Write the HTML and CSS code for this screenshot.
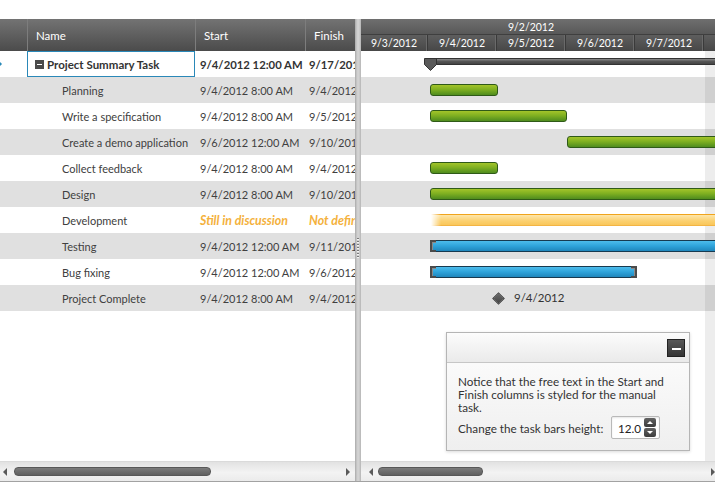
FILE: index.html
```html
<!DOCTYPE html>
<html>
<head>
<meta charset="utf-8">
<link rel="stylesheet" href="styles.css">
</head>
<body>
<div class="gantt">
  <div class="grid">
    <div class="grid-head">
      <div class="hc c0"></div>
      <div class="hc">Name</div>
      <div class="hc">Start</div>
      <div class="hc">Finish</div>
    </div>
    <div class="grid-body">
      <div class="grow summary">
        <div class="cell c0"><svg class="rowicon" width="10" height="10" viewBox="0 0 10 10"><path d="M1 5 H8 M5 2 L8 5 L5 8" fill="none" stroke="#2a8ab8" stroke-width="1.5"/></svg></div>
        <div class="cell name selected"><span class="expander"></span>Project Summary Task</div>
        <div class="cell start">9/4/2012 12:00 AM</div>
        <div class="cell finish">9/17/2012</div>
      </div>
      <div class="grow"><div class="cell c0"></div><div class="cell name child">Planning</div><div class="cell start">9/4/2012 8:00 AM</div><div class="cell finish">9/4/2012</div></div>
      <div class="grow"><div class="cell c0"></div><div class="cell name child">Write a specification</div><div class="cell start">9/4/2012 8:00 AM</div><div class="cell finish">9/5/2012</div></div>
      <div class="grow"><div class="cell c0"></div><div class="cell name child">Create a demo application</div><div class="cell start">9/6/2012 12:00 AM</div><div class="cell finish">9/10/2012</div></div>
      <div class="grow"><div class="cell c0"></div><div class="cell name child">Collect feedback</div><div class="cell start">9/4/2012 8:00 AM</div><div class="cell finish">9/4/2012</div></div>
      <div class="grow"><div class="cell c0"></div><div class="cell name child">Design</div><div class="cell start">9/4/2012 8:00 AM</div><div class="cell finish">9/10/2012</div></div>
      <div class="grow"><div class="cell c0"></div><div class="cell name child">Development</div><div class="cell start free">Still in discussion</div><div class="cell finish free">Not defined</div></div>
      <div class="grow"><div class="cell c0"></div><div class="cell name child">Testing</div><div class="cell start">9/4/2012 12:00 AM</div><div class="cell finish">9/11/2012</div></div>
      <div class="grow"><div class="cell c0"></div><div class="cell name child">Bug fixing</div><div class="cell start">9/4/2012 12:00 AM</div><div class="cell finish">9/6/2012</div></div>
      <div class="grow"><div class="cell c0"></div><div class="cell name child">Project Complete</div><div class="cell start">9/4/2012 8:00 AM</div><div class="cell finish">9/4/2012</div></div>
    </div>
    <div class="hscroll grid-scroll">
      <span class="arrow-l"></span>
      <span class="thumb grid-thumb"></span>
      <span class="arrow-r"></span>
    </div>
  </div>

  <div class="splitter"><div class="grip"></div></div>

  <div class="timeline">
    <div class="tl-head">
      <div class="week">9/2/2012</div>
      <div class="days">
        <div class="day first">9/3/2012</div>
        <div class="day">9/4/2012</div>
        <div class="day">9/5/2012</div>
        <div class="day">9/6/2012</div>
        <div class="day">9/7/2012</div>
        <div class="day"></div>
      </div>
    </div>
    <div class="tl-body">
      <div class="weekend"></div>
      <div class="trow">
        <svg class="sum-marker" width="13" height="13" viewBox="0 0 13 13"><path d="M0.5 0.5 H12.5 V6.5 L6.5 12.5 L0.5 6.5 Z" fill="#5a5a5a" stroke="#333"/></svg>
        <div class="sum-bar" style="left:75px;width:300px"></div>
      </div>
      <div class="trow"><div class="bar green" style="left:69px;width:68px"></div></div>
      <div class="trow"><div class="bar green" style="left:69px;width:137px"></div></div>
      <div class="trow"><div class="bar green" style="left:206px;width:200px"></div></div>
      <div class="trow"><div class="bar green" style="left:69px;width:68px"></div></div>
      <div class="trow"><div class="bar green" style="left:69px;width:300px"></div></div>
      <div class="trow"><div class="bar orange" style="left:70px;width:300px"></div></div>
      <div class="trow"><div class="bar blue" style="left:69px;width:300px"><span class="cap cap-l"></span></div></div>
      <div class="trow"><div class="bar blue" style="left:69px;width:207px"><span class="cap cap-l"></span><span class="cap cap-r"></span></div></div>
      <div class="trow"><div class="diamond" style="left:133px"></div><span class="ms-label">9/4/2012</span></div>

      <div class="panel">
        <div class="panel-head"><span class="min"></span></div>
        <div class="panel-body">
          <p class="note">Notice that the free text in the Start and Finish columns is styled for the manual task.</p>
          <div class="height-row">
            <span>Change the task bars height:</span>
            <div class="numeric">
              <span class="num-val">12.0</span>
              <span class="spin">
                <span class="spin-btn up"></span>
                <span class="spin-btn down"></span>
              </span>
            </div>
          </div>
        </div>
      </div>
    </div>
    <div class="hscroll tl-scroll">
      <span class="arrow-l"></span>
      <span class="thumb tl-thumb"></span>
      <span class="arrow-r"></span>
    </div>
  </div>
</div>
</body>
</html>
```

FILE: styles.css
```css
* { box-sizing: border-box; }
body {
  margin: 0;
  background: #fff;
  font-family: "Lato", "Liberation Sans", sans-serif;
  font-size: 11px;
  color: #404040;
}
.gantt {
  display: flex;
  margin-top: 19px;
  height: 463px;
  border-bottom: 1px solid #a2a2a2;
}

/* ---------- grid ---------- */
.grid {
  width: 355px;
  flex: none;
  display: flex;
  flex-direction: column;
  overflow: hidden;
}
.grid-head {
  height: 32px;
  flex: none;
  display: grid;
  grid-template-columns: 27px 168px 110px 100px;
  background: linear-gradient(#737373, #4b4b4b);
  color: #fff;
  font-size: 11.5px;
}
.hc {
  display: flex;
  align-items: center;
  padding-left: 8px;
  padding-top: 1px;
  border-left: 1px solid #7d7d7d;
  white-space: nowrap;
}
.hc.c0 { border-left: 0; }
.grid-body {
  flex: 1;
  overflow: hidden;
}
.grow {
  height: 26px;
  display: grid;
  grid-template-columns: 27px 168px 110px 100px;
  white-space: nowrap;
  background: #fff;
}
.grow:nth-child(even) { background: #e0e0e0; }
.cell {
  display: flex;
  align-items: center;
  overflow: hidden;
}
.c0 { overflow: hidden; }
.rowicon { margin-left: -7px; }
.name { padding-left: 8px; }
.name.child { padding-left: 35px; }
.start { padding-left: 5px; }
.finish { padding-left: 4px; }
.summary .cell { font-weight: bold; color: #333; font-size: 11.5px; }
.summary .start, .summary .finish { font-size: 11.3px; }
.selected { box-shadow: inset 0 0 0 1px #2a88b8; }
.expander {
  width: 9px;
  height: 9px;
  background: #4a4a4a;
  margin-right: 3px;
  display: flex;
  align-items: center;
  justify-content: center;
}
.expander::after {
  content: "";
  width: 5px;
  height: 1px;
  background: #fff;
}
.free {
  color: #f4b13c;
  font-weight: bold;
  font-style: italic;
  font-size: 12.4px;
}

/* ---------- scrollbars ---------- */
.hscroll {
  height: 20px;
  flex: none;
  display: flex;
  align-items: center;
  background: linear-gradient(#e2e2e2, #f3f3f3 55%, #ebebeb);
  border-top: 1px solid #dadada;
}
.grid-scroll { padding: 0 5px 0 3px; }
.tl-scroll { padding: 0 0 0 8px; }
.arrow-l {
  width: 0; height: 0;
  border-right: 4px solid #5a5a5a;
  border-top: 4px solid transparent;
  border-bottom: 4px solid transparent;
}
.arrow-r {
  width: 0; height: 0;
  margin-left: auto;
  border-left: 4px solid #5a5a5a;
  border-top: 4px solid transparent;
  border-bottom: 4px solid transparent;
}
.thumb {
  height: 9px;
  border-radius: 4px;
  background: linear-gradient(#7b7b7b, #606060);
  border: 1px solid #585858;
}
.grid-thumb { margin-left: 7px; width: 197px; }
.tl-thumb { margin-left: 5px; width: 105px; }

/* ---------- splitter ---------- */
.splitter {
  width: 6px;
  flex: none;
  background: linear-gradient(90deg, #bdbdbd, #d6d6d6 50%, #c6c6c6);
  border-left: 1px solid #b2b2b2;
  border-right: 1px solid #bcbcbc;
  display: flex;
  justify-content: center;
}
.grip {
  margin-top: 219px;
  width: 2px;
  height: 20px;
  background: repeating-linear-gradient(#7a7a7a 0 1px, #f4f4f4 1px 2px, transparent 2px 3px);
}

/* ---------- timeline ---------- */
.timeline {
  flex: 1;
  min-width: 0;
  display: flex;
  flex-direction: column;
  overflow: hidden;
}
.tl-head {
  height: 32px;
  flex: none;
  color: #fff;
  font-size: 10.5px;
}
.week {
  height: 16px;
  line-height: 16px;
  text-align: center;
  padding-right: 14px;
  background: linear-gradient(#6f6f6f, #585858);
  border-bottom: 1px solid #3f3f3f;
}
.days {
  height: 16px;
  display: flex;
  background: linear-gradient(#5e5e5e, #474747);
}
.day {
  flex: none;
  width: 69px;
  text-align: center;
  line-height: 16px;
  border-right: 1px solid #3a3a3a;
  box-shadow: inset -1px 0 0 #6a6a6a;
  white-space: nowrap;
  overflow: hidden;
}
.day.first { width: 67px; }
.tl-body {
  flex: 1;
  position: relative;
  overflow: hidden;
}
.weekend {
  position: absolute;
  left: 344px;
  top: 0;
  bottom: 0;
  width: 40px;
  background: rgba(0, 0, 0, 0.07);
  z-index: 1;
}
.trow {
  height: 26px;
  position: relative;
  background: #fff;
}
.trow:nth-child(odd) { background: #e0e0e0; }

.bar {
  position: absolute;
  top: 7px;
  height: 12px;
  z-index: 2;
}
.green {
  border: 1px solid #2f5a18;
  border-radius: 3px;
  background: linear-gradient(#a3c42a, #7fb021 45%, #4f8c1e);
}
.orange {
  border-top: 1px solid #f0a41c;
  border-bottom: 1px solid #f3b443;
  background: linear-gradient(#fde6ab, #fbd06f 60%, #f9c65a);
  -webkit-mask-image: linear-gradient(90deg, transparent 0, #000 10px);
  mask-image: linear-gradient(90deg, transparent 0, #000 10px);
}
.blue {
  border: 1px solid #173a50;
  background: linear-gradient(#4dbcec, #2ea3da 50%, #1f86bc);
}
.cap {
  position: absolute;
  top: -1px;
  bottom: -1px;
  width: 6px;
  border: 2px solid #4b4b4b;
  box-shadow: inset 1px 1px 0 #8a8a8a;
}
.cap-l { left: -1px; border-right: 0; }
.cap-r { right: -1px; border-left: 0; box-shadow: inset -1px 1px 0 #8a8a8a; }

.sum-marker {
  position: absolute;
  left: 63px;
  top: 7px;
  z-index: 3;
}
.sum-bar {
  position: absolute;
  top: 7px;
  height: 7px;
  z-index: 2;
  border: 1px solid #333;
  background: linear-gradient(#8a8a8a, #555 50%, #444);
}
.diamond {
  position: absolute;
  top: 9px;
  width: 9px;
  height: 9px;
  transform: rotate(45deg);
  background: linear-gradient(135deg, #6a6a6a, #444);
  border: 1px solid #3a3a3a;
  z-index: 2;
}
.ms-label {
  position: absolute;
  left: 153px;
  top: 0;
  line-height: 26px;
  color: #333;
  font-size: 11.5px;
  z-index: 2;
}

/* ---------- floating panel ---------- */
.panel {
  position: absolute;
  left: 85px;
  top: 281px;
  width: 244px;
  height: 119px;
  border: 1px solid #b5b5b5;
  background: linear-gradient(#fefefe, #efefef);
  box-shadow: 0 1px 3px rgba(0, 0, 0, 0.15);
  z-index: 4;
  display: flex;
  flex-direction: column;
  color: #333;
  font-size: 11.7px;
}
.panel-head {
  height: 30px;
  flex: none;
  display: flex;
  align-items: center;
  justify-content: flex-end;
  padding-right: 4px;
  background: linear-gradient(#fcfcfc, #eaeaea);
  border-bottom: 1px solid #c6c6c6;
}
.min {
  width: 18px;
  height: 18px;
  background: linear-gradient(#585858, #353535);
  border: 1px solid #222;
  display: flex;
  align-items: center;
  justify-content: center;
}
.min::after {
  content: "";
  width: 9px;
  height: 2px;
  background: #fff;
  margin-top: 3px;
}
.panel-body {
  padding: 12px 29px 0 11px;
}
.note {
  margin: 0;
  line-height: 13px;
  margin-right: -20px;
}
.height-row {
  margin-top: 2px;
  display: flex;
  align-items: center;
  gap: 4px;
}
.numeric {
  margin-left: auto;
  width: 49px;
  height: 23px;
  border: 1px solid #b9b9b9;
  border-radius: 2px;
  background: #fff;
  box-shadow: inset 0 1px 2px rgba(0, 0, 0, 0.1);
  display: flex;
  align-items: center;
  justify-content: flex-end;
  padding-right: 3px;
}
.num-val { margin-right: 3px; color: #222; }
.spin {
  display: flex;
  flex-direction: column;
  gap: 1px;
}
.spin-btn {
  width: 12px;
  height: 9px;
  border-radius: 2px;
  background: linear-gradient(#626262, #3c3c3c);
  display: flex;
  align-items: center;
  justify-content: center;
}
.spin-btn.up::after {
  content: "";
  border-left: 3px solid transparent;
  border-right: 3px solid transparent;
  border-bottom: 3px solid #fff;
}
.spin-btn.down::after {
  content: "";
  border-left: 3px solid transparent;
  border-right: 3px solid transparent;
  border-top: 3px solid #fff;
}
```
